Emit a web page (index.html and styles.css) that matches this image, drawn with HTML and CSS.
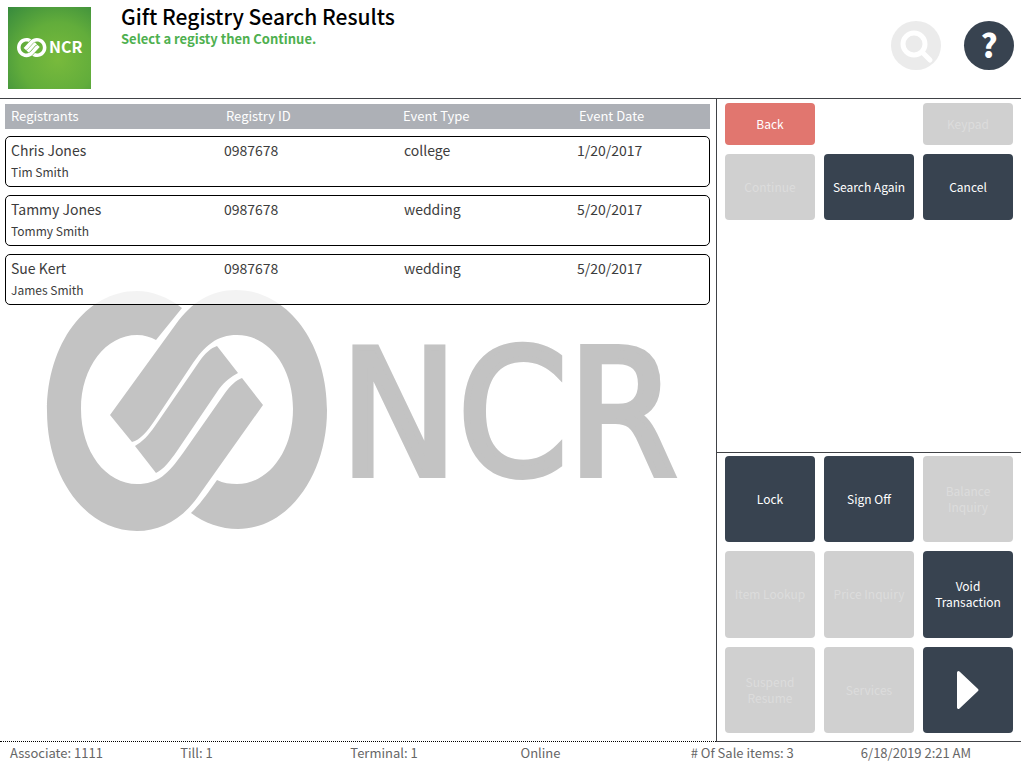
FILE: index.html
```html
<!DOCTYPE html>
<html lang="en">
<head>
    <meta charset="UTF-8">
    <meta name="viewport" content="width=device-width, initial-scale=1.0">
    <title>Gift Registry Search Results</title>
    <link rel="stylesheet" href="styles.css">
</head>
<body>
    <header class="header">
        <svg class="logo" viewBox="0 0 83 82" role="img" aria-label="NCR">
            <defs>
                <radialGradient id="logoGreen" cx="60%" cy="64%" r="90%">
                    <stop offset="0" stop-color="#78ba3c"/>
                    <stop offset="0.5" stop-color="#62ad3b"/>
                    <stop offset="1" stop-color="#34883d"/>
                </radialGradient>
            </defs>
            <rect width="83" height="82" fill="url(#logoGreen)"/>
            <use href="#rings" fill="#fff" transform="translate(4.1 15.6) scale(0.105 0.08)"/>
            <text class="logo-text" x="41" y="46">NCR</text>
        </svg>
        <div class="titles">
            <h1>Gift Registry Search Results</h1>
            <p>Select a registy then Continue.</p>
        </div>
        <div class="tools">
            <button class="round-button" disabled aria-label="Search">
                <svg viewBox="0 0 50 50">
                    <circle cx="23" cy="23" r="11" fill="none" stroke="#fff" stroke-width="5"/>
                    <path d="M31 31 L39 39" stroke="#fff" stroke-width="5" stroke-linecap="round"/>
                </svg>
            </button>
            <button class="round-button help" aria-label="Help">?</button>
        </div>
    </header>

    <div class="content">
        <main class="results">
            <svg class="watermark" viewBox="0 0 716 642" aria-hidden="true">
                <g id="rings">
                    <path d="M182 209 C168 198 152 192 137 192 C86 192 47 245 47 312 C47 379 86 432 137 432 C160 432 181 421 197 399 L263 306 L242 279 C236 281 230 287 225 294 L183 354 C168 375 158 385 137 385 C106 385 81 353 81 310 C81 268 106 236 137 236 C144 236 151 238 156 241 Z"/>
                    <path d="M110 316 L176 225 C192 203 211 191 236 191 C287 191 327 244 327 311 C327 378 287 430 238 430 C221 430 204 424 191 414 C201 404 208 394 217 381 C223 384 230 385 237 385 C268 385 293 353 293 310 C293 267 268 236 237 236 C217 236 205 246 191 267 L155 321 C147 333 140 341 132 343 Z"/>
                    <path d="M217 247 L238 274 C231 278 225 282 219 290 L177 352 C170 362 164 370 156 374 L135 347 C142 343 149 336 155 327 L199 263 C205 254 211 249 217 247 Z"/>
                </g>
                <text class="watermark-text" x="340" y="376">NCR</text>
            </svg>
            <table class="registries">
                <thead>
                    <tr>
                        <th>Registrants</th>
                        <th>Registry ID</th>
                        <th>Event Type</th>
                        <th>Event Date</th>
                    </tr>
                </thead>
                <tbody>
                    <tr>
                        <td>Chris Jones <span class="partner">Tim Smith</span></td>
                        <td>0987678</td>
                        <td>college</td>
                        <td>1/20/2017</td>
                    </tr>
                    <tr>
                        <td>Tammy Jones <span class="partner">Tommy Smith</span></td>
                        <td>0987678</td>
                        <td>wedding</td>
                        <td>5/20/2017</td>
                    </tr>
                    <tr>
                        <td>Sue Kert <span class="partner">James Smith</span></td>
                        <td>0987678</td>
                        <td>wedding</td>
                        <td>5/20/2017</td>
                    </tr>
                </tbody>
            </table>
        </main>

        <aside class="sidebar">
            <div class="actions">
                <button class="back">Back</button>
                <button class="keypad" disabled>Keypad</button>
                <button disabled>Continue</button>
                <button>Search Again</button>
                <button>Cancel</button>
            </div>
            <div class="functions">
                <button>Lock</button>
                <button>Sign Off</button>
                <button disabled>Balance Inquiry</button>
                <button disabled>Item Lookup</button>
                <button disabled>Price Inquiry</button>
                <button>Void Transaction</button>
                <button disabled>Suspend Resume</button>
                <button disabled>Services</button>
                <button aria-label="Next">
                    <svg class="arrow" viewBox="0 0 24 40">
                        <path d="M2.5 2.5 L21 20 L2.5 37.5 Z" fill="#fff" stroke="#fff" stroke-width="3" stroke-linejoin="round"/>
                    </svg>
                </button>
            </div>
        </aside>
    </div>

    <footer class="status">
        <span>Associate: 1111</span>
        <span>Till: 1</span>
        <span>Terminal: 1</span>
        <span>Online</span>
        <span># Of Sale items: 3</span>
        <span>6/18/2019 2:21 AM</span>
    </footer>
</body>
</html>
```
FILE: styles.css
```css
* {
    box-sizing: border-box;
    margin: 0;
    padding: 0;
}

body {
    display: flex;
    flex-direction: column;
    min-height: 100vh;
    background-color: #fff;
    color: #3c3c3c;
    font-family: "Noto Sans CJK SC", "Noto Sans", sans-serif;
}

/* Header */
.header {
    display: flex;
    height: 99px;
    padding: 7px 7px 0 8px;
    border-bottom: 1px solid #404246;
}
.logo {
    width: 83px;
    height: 82px;
}
.logo-text {
    fill: #fff;
    font-size: 16px;
    font-weight: 700;
}
.titles {
    flex: 1;
    margin-left: 30px;
}
h1 {
    color: #000;
    font-size: 21px;
    font-weight: 500;
    line-height: 18px;
}
.titles p {
    color: #4eb04f;
    font-size: 13px;
    font-weight: 700;
    line-height: 28px;
}
.tools {
    display: flex;
    gap: 23px;
    margin-top: 14px;
}
.round-button {
    width: 50px;
    height: 49px;
    border: none;
    border-radius: 50%;
    background-color: #ebebeb;
}
.help {
    background-color: #384350;
    color: #fff;
    font-family: inherit;
    font-size: 32px;
    font-weight: 900;
    line-height: 44px;
    padding-bottom: 4px;
}

/* Results */
.content {
    display: flex;
    flex: 1;
}
.results {
    position: relative;
    flex: 1;
    padding: 5px 6px 0 5px;
    border-bottom: 1px dotted #000;
}
.watermark {
    position: absolute;
    inset: 0;
    width: 100%;
    height: 100%;
    fill: #c3c3c3;
}
.watermark-text {
    font-family: "DejaVu Sans Condensed", "Liberation Sans", sans-serif;
    font-size: 175px;
    stroke: #c3c3c3;
    stroke-width: 6px;
}
.registries {
    display: block;
    position: relative;
}
thead,
tbody {
    display: grid;
    gap: 8px;
}
thead {
    margin-bottom: 7px;
}
tr {
    display: grid;
}
thead tr {
    grid-template-columns: 215fr 177fr 176fr 125fr;
    height: 25px;
    padding: 0 6px;
    background-color: #adb0b6;
}
tbody tr {
    grid-template-columns: 213fr 180fr 173fr 127fr;
    height: 51px;
    padding: 2px 5px;
    border: 1px solid #000;
    border-radius: 5px;
    background-color: rgb(255 255 255 / 0.8);
}
th {
    color: #fff;
    font-size: 13px;
    font-weight: 400;
    line-height: 23px;
    text-align: left;
}
td {
    font-size: 14px;
    line-height: 22px;
}
.partner {
    display: block;
    font-size: 12px;
}

/* Buttons */
.sidebar {
    display: flex;
    flex-direction: column;
    width: 305px;
    border-left: 1px solid #404246;
    border-bottom: 1px solid #404246;
}
.actions,
.functions {
    display: grid;
    grid-template-columns: repeat(3, 1fr);
    gap: 9px;
}
.actions {
    flex: 1;
    grid-template-rows: 42px 66px;
    padding: 4px 8px;
}
.keypad {
    grid-column: 3;
}
.functions {
    height: 289px;
    grid-template-rows: repeat(3, 1fr);
    padding: 3px 8px 8px;
    border-top: 1px solid #404246;
}
.sidebar button {
    padding: 0 8px;
    border: none;
    border-radius: 4px;
    background-color: #384350;
    color: #fff;
    font-family: inherit;
    font-size: 12px;
    line-height: 16px;
}
.sidebar .back {
    background-color: #e1766f;
}
.sidebar button:disabled {
    background-color: #d0d0d0;
    color: #dcdcdc;
}
.arrow {
    width: 24px;
    height: 40px;
    vertical-align: middle;
}

/* Status bar */
.status {
    display: grid;
    grid-template-columns: repeat(6, 1fr);
    height: 23px;
    color: #666;
    font-size: 13px;
    line-height: 21px;
}
.status span {
    padding-left: 10px;
    white-space: nowrap;
}
```
